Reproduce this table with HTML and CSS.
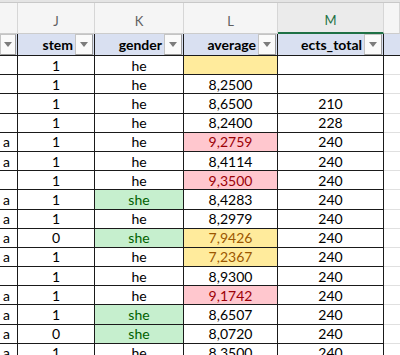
FILE: index.html
```html
<!doctype html>
<html lang="en">
<head>
  <meta charset="utf-8">
  <meta name="viewport" content="width=device-width, initial-scale=1.0">
  <title>Sheet</title>
  <link rel="stylesheet" href="styles.css">
</head>
<body>

<div class="sheet">
  <div class="topband"></div>

  <div class="row letters">
    <div class="cell c-i"></div>
    <div class="cell c-j">J</div>
    <div class="cell c-k">K</div>
    <div class="cell c-l">L</div>
    <div class="cell c-m selected">M</div>
    <div class="cell c-n"></div>
  </div>

  <div class="row filters">
    <div class="cell c-i"><span class="drop"></span></div>
    <div class="cell c-j">stem<span class="drop"></span></div>
    <div class="cell c-k">gender<span class="drop"></span></div>
    <div class="cell c-l">average<span class="drop"></span></div>
    <div class="cell c-m">ects_total<span class="drop"></span></div>
    <div class="cell c-n"></div>
  </div>

  <div id="rows"></div>
</div>

<script>
// [col I, stem, gender, average, ects_total, average highlight]
const data = [
  ['', '1', 'he', '', '', 'neutral'],
  ['', '1', 'he', '8,2500', '', ''],
  ['', '1', 'he', '8,6500', '210', ''],
  ['', '1', 'he', '8,2400', '228', ''],
  ['a', '1', 'he', '9,2759', '240', 'bad'],
  ['a', '1', 'he', '8,4114', '240', ''],
  ['', '1', 'he', '9,3500', '240', 'bad'],
  ['a', '1', 'she', '8,4283', '240', ''],
  ['a', '1', 'he', '8,2979', '240', ''],
  ['a', '0', 'she', '7,9426', '240', 'neutral'],
  ['a', '1', 'he', '7,2367', '240', 'neutral'],
  ['', '1', 'he', '8,9300', '240', ''],
  ['a', '1', 'he', '9,1742', '240', 'bad'],
  ['a', '1', 'she', '8,6507', '240', ''],
  ['a', '0', 'she', '8,0720', '240', ''],
  ['a', '1', 'he', '8,3500', '240', '']
];

const rows = document.getElementById('rows');
data.forEach(function (r) {
  const row = document.createElement('div');
  row.className = 'row data';
  row.innerHTML = `
    <div class="cell c-i">${r[0]}</div>
    <div class="cell c-j">${r[1]}</div>
    <div class="cell c-k ${r[2] === 'she' ? 'good' : ''}">${r[2]}</div>
    <div class="cell c-l ${r[5]}">${r[3]}</div>
    <div class="cell c-m">${r[4]}</div>
    <div class="cell c-n"></div>
  `;
  rows.appendChild(row);
});
</script>

</body>
</html>
```

FILE: styles.css
```css
body {
  margin: 0;
  background: #ffffff;
  font-family: Lato, 'Liberation Sans', sans-serif;
  font-size: 14px;
  color: #000;
  overflow: hidden;
}

.sheet {
  width: 400px;
}

.topband {
  height: 2px;
  background: #e4e4e4;
  border-bottom: 1px solid #c8c8c8;
}

.row {
  display: flex;
}

.cell {
  box-sizing: border-box;
  flex: none;
  display: flex;
  align-items: center;
  justify-content: center;
  white-space: nowrap;
  overflow: hidden;
}

.c-i { width: 18px; }
.c-j { width: 77px; }
.c-k { width: 89px; }
.c-l { width: 94px; }
.c-m { width: 106px; }
.c-n { flex: 1; }

/* column letters */
.letters .cell {
  height: 31px;
  padding-top: 5px;
  background: #f5f5f5;
  color: #5f5f5f;
  font-size: 13px;
  border-right: 1px solid #d6d6d6;
  border-bottom: 1px solid #cccccc;
}

.letters .selected {
  background: #ebebeb;
  color: #1e7145;
  border-bottom: 2px solid #1e7145;
}

/* table header with filters */
.filters .cell {
  height: 22px;
  background: #d9e0f1;
  font-weight: 700;
  justify-content: flex-end;
  padding-right: 1px;
  gap: 2px;
  border-right: 1px solid #1a1a1a;
  border-bottom: 1px solid #1a1a1a;
}

.filters .c-n {
  border-right: none;
}

.drop {
  box-sizing: border-box;
  width: 18px;
  height: 21px;
  margin-top: -1px;
  background: #fafafa;
  border: 1px solid #c4c4c4;
  border-right-color: #9a9a9a;
  border-bottom-color: #9a9a9a;
  display: flex;
  align-items: center;
  justify-content: center;
}

.drop::after {
  content: "";
  border-left: 4px solid transparent;
  border-right: 4px solid transparent;
  border-top: 5px solid #7c7c7c;
}

.filters .c-i .drop {
  width: 16px;
}

/* data rows */
.data .cell {
  height: 19.2px;
  border-right: 1px solid #1a1a1a;
  border-bottom: 1px solid #1a1a1a;
}

.data .c-i {
  justify-content: flex-end;
  padding-right: 7px;
}

.data .c-n {
  border-right: none;
  border-bottom-color: #e0e0e0;
}

.neutral {
  background: #ffeb9c;
  color: #9c5700;
}

.bad {
  background: #ffc7ce;
  color: #9c0006;
}

.good {
  background: #c6efce;
  color: #006100;
}
```
